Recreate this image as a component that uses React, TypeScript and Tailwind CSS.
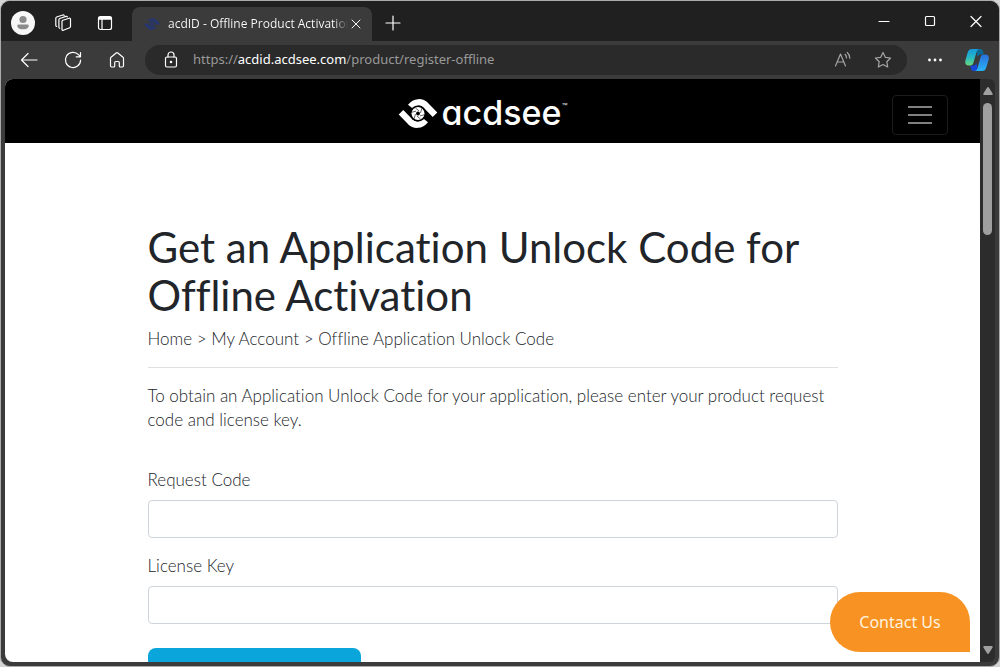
import type { ReactNode } from "react";

function Icon({ children, className = "size-5" }: { children: ReactNode; className?: string }) {
  return (
    <svg viewBox="0 0 20 20" fill="none" stroke="currentColor" strokeWidth="1.2" strokeLinecap="round" strokeLinejoin="round" className={className} aria-hidden="true">
      {children}
    </svg>
  );
}

function IconButton({ label, children, className = "w-11" }: { label: string; children: ReactNode; className?: string }) {
  return (
    <button type="button" aria-label={label} className={`flex h-8 shrink-0 items-center justify-center ${className}`}>
      {children}
    </button>
  );
}

function EyeMark({ className, iris }: { className: string; iris: string }) {
  return (
    <svg viewBox="0 0 40 29" className={className} aria-hidden="true">
      <g fill="none" stroke="currentColor" strokeWidth="6.4">
        <path d="M12.500 7.800C17 2.200 23.500 2 28 6.400L37 15.700" />
        <path d="M27.500 21.200C23 26.800 16.500 27 12 22.600L3 13.300" />
      </g>
      <circle cx="20" cy="14.500" r="8" fill={iris} />
      <circle cx="20" cy="14.500" r="6.500" fill="currentColor" />
      <path
        d="M17.300 8.800L21 12M23.800 9.500L22.500 14M26.200 15.800L22 16.800M22.700 20.200L19 17M16.200 19.500L17.500 15M13.800 13.200L18 12.200"
        stroke={iris}
        strokeWidth=".6"
      />
      <circle cx="20" cy="14.500" r="1.900" fill={iris} />
    </svg>
  );
}

function TitleBar() {
  return (
    <header className="flex h-10 shrink-0 items-end bg-[#202020] text-white">
      <div className="flex h-9 w-[131px] shrink-0 items-center pl-2">
        <button type="button" aria-label="Profile" className="flex size-7 items-center justify-center">
          <svg viewBox="0 0 24 24" className="size-6" aria-hidden="true">
            <circle cx="12" cy="12" r="12" fill="#f7f7f7" />
            <circle cx="12" cy="8.500" r="3.600" fill="#8b8b8b" />
            <path d="M7.500 13.500h9q1.200 0 1.200 1.200c0 2.500-2.500 3.600-5.700 3.600s-5.700-1.100-5.700-3.600q0-1.200 1.200-1.200z" fill="#8b8b8b" />
          </svg>
        </button>
        <IconButton label="Workspaces" className="ml-2 w-9">
          <Icon>
            <path d="M9 8.300Q9 7.500 9.800 7.200L16.300 5.200Q17.500 5 17.500 6.200V13.500Q17.500 14.400 16.700 14.700L10.300 17.300Q9 17.600 9 16.400Z" />
            <path d="M6.700 15.300Q5.900 15 5.900 14V6.700Q5.900 5.800 6.700 5.500L13 3.400Q14 3.200 14.400 3.900" />
            <path d="M3.700 13.500Q2.800 13.200 2.800 12.200V5.200Q2.800 4.300 3.600 4L9.800 2Q10.800 1.800 11.200 2.500" />
          </Icon>
        </IconButton>
        <IconButton label="Tab actions" className="ml-2 w-8">
          <Icon>
            <rect x="3.500" y="3.500" width="13" height="13" rx="2" />
            <path d="M3.500 5.300H16.500" strokeWidth="3" strokeLinecap="butt" />
            <path d="M7 6V16.500" />
          </Icon>
        </IconButton>
      </div>
      <div className="flex h-[34px] w-60 shrink-0 items-center rounded-t-lg bg-[#3b3b3b] pr-2 pl-3">
        <EyeMark className="h-3 w-4 shrink-0 text-[#243674]" iris="#3b3b3b" />
        <span className="ml-2 flex-1 overflow-hidden bg-linear-to-r from-white from-92% to-[#3b3b3b] bg-clip-text font-['Open_Sans',sans-serif] text-xs whitespace-nowrap text-transparent">
          acdID - Offline Product Activation
        </span>
        <button type="button" aria-label="Close tab" className="flex size-4 shrink-0 items-center justify-center">
          <Icon className="size-4">
            <path d="M5 5L15 15M15 5L5 15" />
          </Icon>
        </button>
      </div>
      <IconButton label="New tab" className="mb-0.5 w-[42px]">
        <Icon>
          <path d="M10 3V17M3 10H17" />
        </Icon>
      </IconButton>
      <div className="ml-auto flex h-full items-center">
        <IconButton label="Minimize" className="w-[46px]">
          <Icon>
            <path d="M5 10.500H15" />
          </Icon>
        </IconButton>
        <IconButton label="Maximize" className="w-[46px]">
          <Icon>
            <rect x="5.500" y="5.500" width="9" height="9" rx="1" />
          </Icon>
        </IconButton>
        <IconButton label="Close" className="w-[46px]">
          <Icon>
            <path d="M5 5.500L15 15.500M15 5.500L5 15.500" />
          </Icon>
        </IconButton>
      </div>
    </header>
  );
}

function Copilot() {
  return (
    <svg viewBox="0 0 24 24" className="size-6" aria-hidden="true">
      <defs>
        <linearGradient id="left" x1="0" y1="0" x2="0" y2="1">
          <stop offset="0" stopColor="#1798dc" />
          <stop offset=".5" stopColor="#25b9c4" />
          <stop offset="1" stopColor="#6bd67c" />
        </linearGradient>
        <linearGradient id="right" x1="0" y1="0" x2="0" y2="1">
          <stop offset="0" stopColor="#2a6edb" />
          <stop offset="1" stopColor="#28b5f7" />
        </linearGradient>
      </defs>
      <path d="M11 1h4.500c1.500 0 2 .8 2.400 2l1 3.500h-3c-2 0-3 1-3.500 2.500z" fill="#0c6794" />
      <path d="M13 23H8.500c-1.500 0-2-.8-2.400-2l-1-3.500h3c2 0 3-1 3.500-2.500z" fill="#1647d8" />
      <path d="M7 1h7c-1.500.5-2 1.500-2.500 3L8.500 14.500c-.6 2-1.500 3-3.500 3H3.500C.5 17.500-.3 15 .5 12L2.700 4.500C3.400 2 4.800 1 7 1z" fill="url(#left)" />
      <path d="M17 23h-7c1.500-.5 2-1.500 2.500-3l3-10.500c.6-2 1.500-3 3.500-3h1.500c3 0 3.800 2.500 3 5.500l-2.200 7.500C20.600 22 19.200 23 17 23z" fill="url(#right)" />
    </svg>
  );
}

function Toolbar() {
  return (
    <nav aria-label="Browser" className="flex h-[38px] shrink-0 items-center bg-[#3b3b3b] pr-2 pl-1.5 text-white">
      <IconButton label="Back">
        <Icon>
          <path d="M2.500 10H18M9 3.500L2.500 10L9 16.500" />
        </Icon>
      </IconButton>
      <IconButton label="Refresh">
        <Icon>
          <path d="M17.600 10A7.600 7.600 0 1 1 15.500 4.700L17.500 6.800M17.500 2.500V6.800H13.200" />
        </Icon>
      </IconButton>
      <IconButton label="Home">
        <Icon>
          <path d="M3.500 8.300Q3.500 7.700 4 7.200L9.200 3Q10 2.400 10.800 3L16 7.200Q16.500 7.700 16.500 8.300V15.800Q16.500 17 15.300 17H13.200Q12.300 17 12.300 16V12.500Q12.300 11.500 11.300 11.500H8.700Q7.700 11.500 7.700 12.500V16Q7.700 17 6.800 17H4.700Q3.500 17 3.500 15.800Z" />
        </Icon>
      </IconButton>
      <div className="ml-1.5 flex h-[30px] min-w-0 flex-1 items-center rounded-full bg-[#2a2a2a] pr-1 pl-4">
        <Icon className="size-5 shrink-0">
          <rect x="4.500" y="7" width="11" height="10" rx="1.500" />
          <path d="M7 7V5a3 3 0 0 1 6 0V7" />
          <circle cx="10" cy="12" r=".7" fill="currentColor" />
        </Icon>
        <p className="ml-3 min-w-0 flex-1 truncate font-['Noto_Sans',sans-serif] text-[13px] text-[#999999]">
          https://<span className="text-white">acdid.acdsee.com</span>/product/register-offline
        </p>
        <div className="flex text-[#a5a5a5]">
          <IconButton label="Read aloud" className="w-10">
            <Icon>
              <path d="M2.500 16L7.500 4L12.500 16M4.200 12H10.800M12 4.300Q13.500 5.700 13.500 8M14.300 2.500Q16.800 4.800 16.800 8.200" />
            </Icon>
          </IconButton>
          <IconButton label="Add to favorites" className="w-10">
            <Icon>
              <path d="M10 2.500L12.300 7.300L17.600 8L13.800 11.700L14.700 17L10 14.500L5.300 17L6.200 11.700L2.400 8L7.700 7.300Z" />
            </Icon>
          </IconButton>
        </div>
      </div>
      <IconButton label="More" className="ml-1.5 w-11">
        <Icon>
          <g fill="currentColor" stroke="none">
            <circle cx="4.500" cy="10" r="1.400" />
            <circle cx="10" cy="10" r="1.400" />
            <circle cx="15.500" cy="10" r="1.400" />
          </g>
        </Icon>
      </IconButton>
      <IconButton label="Copilot" className="-mr-1 ml-1.5 w-8 pr-1">
        <Copilot />
      </IconButton>
    </nav>
  );
}

function SiteHeader() {
  return (
    <header className="grid h-16 grid-cols-[1fr_auto_1fr] items-center bg-black pr-8 text-white">
      <a href="#home" className="col-start-2 mt-1 ml-3 flex items-center">
        <EyeMark className="h-[29px] w-10" iris="#000000" />
        <span className="ml-1 font-['Inter',sans-serif] text-[34px] leading-10 font-medium [font-feature-settings:'cv11']">acdsee</span>
        <span className="mb-4 font-['Liberation_Sans',sans-serif] text-[6px] leading-2">™</span>
      </a>
      <button type="button" aria-label="Toggle navigation" className="mt-2 flex h-10 w-14 flex-col items-center justify-center gap-1.5 justify-self-end rounded-sm border border-[#1c1c1c]">
        <span className="h-0.5 w-6 bg-[#808080]" />
        <span className="h-0.5 w-6 bg-[#808080]" />
        <span className="h-0.5 w-6 bg-[#808080]" />
      </button>
    </header>
  );
}

function Field({ id, label }: { id: string; label: string }) {
  return (
    <div className="mb-4">
      <label htmlFor={id} className="mb-2 block">
        {label}
      </label>
      <input id={id} type="text" className="block h-[38px] w-full rounded-sm border border-[#ced4da] bg-white px-3" />
    </div>
  );
}

function Scrollbar() {
  return (
    <div className="flex w-[15px] shrink-0 flex-col items-center rounded-r-md bg-[#2c2c2c] py-2 text-[#a0a0a0]" aria-hidden="true">
      <svg viewBox="0 0 10 8" className="h-2 w-2.5" fill="currentColor">
        <path d="M5 0Q5.600 0 6 .7L9.600 6.500Q10 8 9 8H1Q0 8 .4 6.500L4 .7Q4.400 0 5 0Z" />
      </svg>
      <div className="mt-2 h-[132px] w-[9px] rounded-full bg-[#9f9f9f]" />
      <svg viewBox="0 0 10 8" className="mt-auto h-2 w-2.5" fill="currentColor">
        <path d="M5 8Q5.600 8 6 7.300L9.600 1.500Q10 0 9 0H1Q0 0 .4 1.500L4 7.300Q4.400 8 5 8Z" />
      </svg>
    </div>
  );
}

export default function App() {
  return (
    <div className="h-screen bg-[#d5d5d5]">
      <div className="flex h-full flex-col overflow-hidden rounded-[10px] border border-[#a9adaa] bg-[#3b3b3b]">
        <TitleBar />
        <Toolbar />
        <div className="relative mx-1 mb-1 flex min-h-0 flex-1">
          <div className="min-w-0 flex-1 overflow-hidden rounded-l-lg bg-white">
            <SiteHeader />
            <main className="mx-auto max-w-[690px] pt-20 font-['Lato',sans-serif] text-[17px] leading-6 font-light text-[#212529] [font-variant-ligatures:none]">
              <h1 className="text-[42px] leading-12 font-normal">Get an Application Unlock Code for Offline Activation</h1>
              <nav aria-label="Breadcrumb" className="mt-2">
                <a href="#home">Home</a> &gt; <a href="#account">My Account</a> &gt; Offline Application Unlock Code
              </nav>
              <hr className="my-4 border-[#e0e0e0]" />
              <p>
                To obtain an Application Unlock Code for your application, please enter your product request code and license key.
              </p>
              <form className="mt-9">
                <Field id="request-code" label="Request Code" />
                <Field id="license-key" label="License Key" />
                <button type="button" aria-label="Submit" className="mt-2 h-12 w-[213px] rounded-lg bg-[#0aa5da]" />
              </form>
            </main>
          </div>
          <Scrollbar />
          <button type="button" className="absolute right-[25px] bottom-2.5 h-[60px] w-[140px] rounded-[30px] rounded-br-none bg-[#f79223] font-['Noto_Sans',sans-serif] text-base text-[#fff3df]">
            Contact Us
          </button>
        </div>
      </div>
    </div>
  );
}
